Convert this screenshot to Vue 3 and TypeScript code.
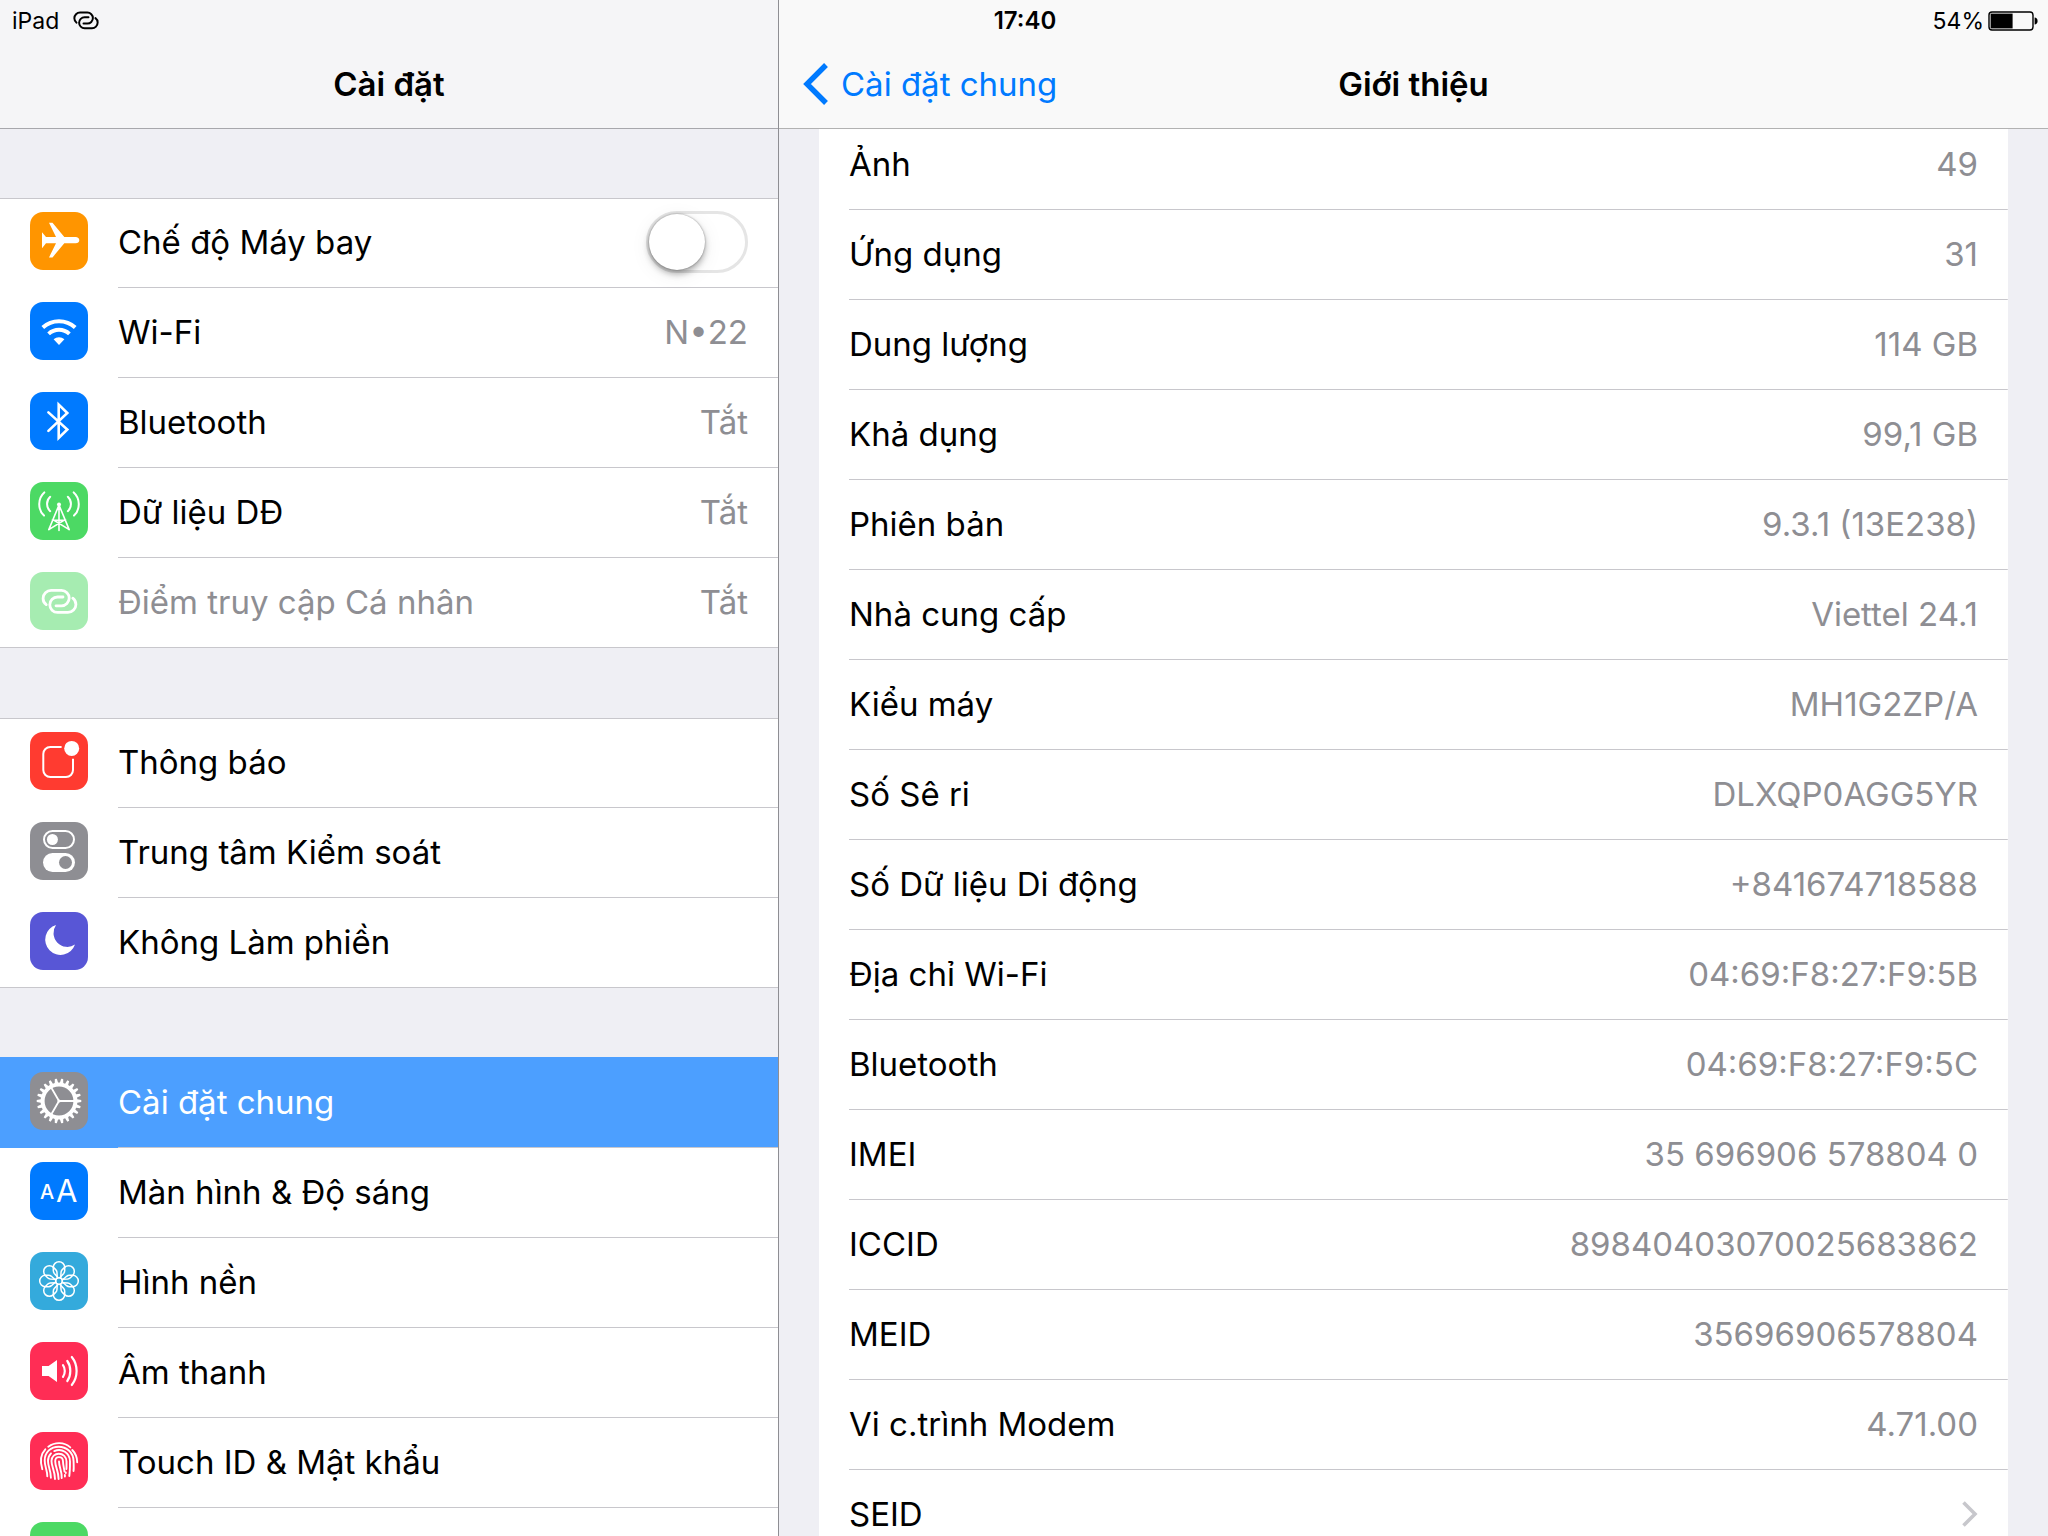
<script setup lang="ts">
import { ref } from 'vue'

interface MenuItem {
  icon: string
  color: string
  label: string
  value?: string
  toggle?: boolean
  disabled?: boolean
  selected?: boolean
}

interface InfoItem {
  label: string
  value?: string
}

const airplaneMode = ref(false)

const groups: MenuItem[][] = [
  [
    { icon: 'airplane', color: '#ff9500', label: 'Chế độ Máy bay', toggle: true },
    { icon: 'wifi', color: '#007aff', label: 'Wi-Fi', value: 'N•22' },
    { icon: 'bluetooth', color: '#007aff', label: 'Bluetooth', value: 'Tắt' },
    { icon: 'cellular', color: '#4cd964', label: 'Dữ liệu DĐ', value: 'Tắt' },
    { icon: 'hotspot', color: '#a6ecb1', label: 'Điểm truy cập Cá nhân', value: 'Tắt', disabled: true },
  ],
  [
    { icon: 'notifications', color: '#ff3b30', label: 'Thông báo' },
    { icon: 'control', color: '#8e8e93', label: 'Trung tâm Kiểm soát' },
    { icon: 'moon', color: '#5856d6', label: 'Không Làm phiền' },
  ],
  [
    { icon: 'gear', color: '#8e8e93', label: 'Cài đặt chung', selected: true },
    { icon: 'display', color: '#007aff', label: 'Màn hình & Độ sáng' },
    { icon: 'wallpaper', color: '#34aadc', label: 'Hình nền' },
    { icon: 'sound', color: '#ff2d55', label: 'Âm thanh' },
    { icon: 'touchid', color: '#ff2d55', label: 'Touch ID & Mật khẩu' },
    { icon: 'battery', color: '#4cd964', label: '' },
  ],
]

const info: InfoItem[] = [
  { label: 'Ảnh', value: '49' },
  { label: 'Ứng dụng', value: '31' },
  { label: 'Dung lượng', value: '114 GB' },
  { label: 'Khả dụng', value: '99,1 GB' },
  { label: 'Phiên bản', value: '9.3.1 (13E238)' },
  { label: 'Nhà cung cấp', value: 'Viettel 24.1' },
  { label: 'Kiểu máy', value: 'MH1G2ZP/A' },
  { label: 'Số Sê ri', value: 'DLXQP0AGG5YR' },
  { label: 'Số Dữ liệu Di động', value: '+841674718588' },
  { label: 'Địa chỉ Wi-Fi', value: '04:69:F8:27:F9:5B' },
  { label: 'Bluetooth', value: '04:69:F8:27:F9:5C' },
  { label: 'IMEI', value: '35 696906 578804 0' },
  { label: 'ICCID', value: '89840403070025683862' },
  { label: 'MEID', value: '35696906578804' },
  { label: 'Vi c.trình Modem', value: '4.71.00' },
  { label: 'SEID' },
]

// Outline of the cog: tapered teeth around a circle centred on 29,29
function gearOutline(teeth: number, root: number, tip: number): string {
  const step = (Math.PI * 2) / teeth
  const at = (r: number, a: number) => `${(29 + r * Math.cos(a)).toFixed(2)} ${(29 + r * Math.sin(a)).toFixed(2)}`
  const points: string[] = []
  for (let i = 0; i < teeth; i++) {
    const a = i * step
    points.push(at(root, a - step * 0.32), at(tip, a - step * 0.16), at(tip, a + step * 0.16), at(root, a + step * 0.32))
  }
  return `M${points.join('L')}Z`
}

const gearPath = gearOutline(22, 18.4, 22.3) + 'M29 14.6a14.4 14.4 0 1 0 0 28.8a14.4 14.4 0 1 0 0-28.8Z'
const linkPath =
  'M16.2 32.6C14 31 13.1 28.8 13.1 26.4A8 8 0 0 1 21.1 18.4H31.5A7.7 7.7 0 0 1 31.5 33.8H26' +
  'M42.8 26.2C45 27.8 45.9 30 45.9 32.4A8 8 0 0 1 37.9 40.4H27.5A7.7 7.7 0 0 1 27.5 25H33'
const petals = [0, 45, 90, 135, 180, 225, 270, 315]
</script>

<template>
  <div class="app">
    <div class="status">
      <div class="carrier">
        <span>iPad</span>
        <svg width="26" height="19" viewBox="11.2 16.2 36.6 26.6" class="line" stroke-width="2.8"><path :d="linkPath" /></svg>
      </div>
      <span class="clock">17:40</span>
      <div class="charge">
        <span>54%</span>
        <svg width="50" height="20" viewBox="0 0 50 20">
          <rect x="1" y="1" width="44" height="18" rx="3" fill="none" stroke="#000" stroke-width="1.4" />
          <rect x="2.6" y="2.6" width="22" height="14.8" fill="#000" />
          <path d="M46.6 6.5c1.8.2 3 1 3 3.5s-1.2 3.3-3 3.5Z" fill="#000" />
        </svg>
      </div>
    </div>

    <aside class="sidebar">
      <header class="bar">
        <h1 class="title">Cài đặt</h1>
      </header>
      <nav class="menu">
        <div v-for="(group, g) in groups" :key="g" class="group">
          <component
            :is="item.toggle ? 'label' : 'a'"
            v-for="item in group"
            :key="item.icon"
            :href="item.toggle ? undefined : '#' + item.icon"
            class="row"
            :class="{ selected: item.selected, disabled: item.disabled }"
          >
            <svg class="icon" viewBox="0 0 58 58" :style="{ background: item.color }" aria-hidden="true">
              <path
                v-if="item.icon === 'airplane'"
                fill="#fff"
                d="M49.3 28.2c0-1.8-1.6-3.1-3.6-3.1H34.3L22.5 10.8H19L26 25.1H16L12 20.2V36.2L16 31.3H26L19 45.4H22.5L34.3 31.3H45.7c2 0 3.6-1.3 3.6-3.1Z"
              />
              <g v-else-if="item.icon === 'wifi'">
                <g class="line butt" stroke-width="4">
                  <path d="M12.8 25.5A24 24 0 0 1 45.2 25.5" />
                  <path d="M18.6 31.9A15.3 15.3 0 0 1 39.4 31.9" />
                </g>
                <path d="M29 43L23.6 37.3A8 8 0 0 1 34.4 37.3Z" fill="#fff" />
              </g>
              <path
                v-else-if="item.icon === 'bluetooth'"
                class="line"
                stroke-width="2.6"
                stroke-miterlimit="8"
                d="M18.4 20.4L37.3 37.5L28.7 46V12.5L37.3 21L18.4 38.9"
              />
              <g v-else-if="item.icon === 'cellular'" class="line" stroke-width="2">
                <path d="M14.3 10.4C7.6 16.2 7.6 27.8 14 33.6M43.7 10.4C50.4 16.2 50.4 27.8 44 33.6" />
                <path d="M20.2 14.8C16 18.6 16 25.4 20.2 29.2M37.8 14.8C42 18.6 42 25.4 37.8 29.2" />
                <path stroke-width="1.6" d="M29 23V48.5M28.6 24L18.8 47.6M29.4 24L39.2 47.6M18.8 47.6L34 38.2H24L39.2 47.6" />
                <circle cx="29" cy="22.6" r="2" fill="#fff" stroke="none" />
              </g>
              <path v-else-if="item.icon === 'hotspot'" class="line" stroke-width="2.8" :d="linkPath" />
              <g v-else-if="item.icon === 'notifications'">
                <path
                  class="line butt"
                  stroke-width="2"
                  d="M31.6 15H20.3a7 7 0 0 0-7 7V38a7 7 0 0 0 7 7H36a7 7 0 0 0 7-7V26.7"
                />
                <circle cx="41.7" cy="16.4" r="7.5" fill="#fff" />
              </g>
              <g v-else-if="item.icon === 'control'">
                <rect class="line" x="14" y="9" width="30" height="17" rx="8.5" stroke-width="2" />
                <circle cx="22.4" cy="17.5" r="5.5" fill="#fff" />
                <rect x="13" y="31" width="32" height="19" rx="9.5" fill="#fff" />
                <circle cx="35.5" cy="40.5" r="6.5" fill="#8e8e93" />
              </g>
              <path
                v-else-if="item.icon === 'moon'"
                fill="#fff"
                d="M26 13A15.3 15.3 0 1 0 45 32.6A13.9 13.9 0 0 1 26 13Z"
              />
              <g v-else-if="item.icon === 'gear'">
                <path :d="gearPath" fill="#fff" fill-rule="evenodd" />
                <path class="line" stroke-width="1.8" d="M29 29H44M29 29L21.5 16M29 29L21.5 42" />
                <circle cx="29" cy="29" r="1.6" fill="#fff" />
              </g>
              <g v-else-if="item.icon === 'display'" fill="#fff">
                <text x="10" y="37" font-size="20" font-weight="500">A</text>
                <text x="26" y="40" font-size="31" font-weight="400">A</text>
              </g>
              <g v-else-if="item.icon === 'wallpaper'" class="line" stroke-width="1.5">
                <circle cx="29" cy="29" r="3.3" />
                <path
                  v-for="angle in petals"
                  :key="angle"
                  :transform="`rotate(${angle} 29 29)`"
                  d="M28.2 25.8L24.3 21.4Q23.3 20.2 23.3 18.600V15.400a5.700 5.700 0 0 1 11.400 0V18.600Q34.700 20.200 33.700 21.400L29.800 25.800"
                />
              </g>
              <g v-else-if="item.icon === 'sound'">
                <path d="M12 24H18.6L27 18V40L18.6 34H12Z" fill="#fff" />
                <path
                  class="line"
                  stroke-width="2.2"
                  d="M33 23.2C35.4 26.5 35.4 31.5 33 34.8M37.3 19C41.3 24.5 41.3 33.5 37.3 39M41.8 15C48.2 23 48.2 35 41.8 43"
                />
              </g>
              <path
                v-else-if="item.icon === 'touchid'"
                class="line"
                stroke-width="1.9"
                d="M18.3 14.7C25 9.8 34 9.8 40.3 15.4M15.3 17.3C10.8 22 9.8 29 12.3 37.2M42.3 18C45.6 21.4 47.2 25.5 47.2 30.2M17.3 44.2C17.3 38 14.7 35 14.7 28.5C14.7 20 21 14.7 28.7 14.7C36 14.7 43.6 20 43.6 29.5C43.6 33 44 36 43.5 39M20.9 45.8C20.9 38 18 35 18 29C18 26 19 23.3 21 21.3M24.3 19.1C31.5 15.8 40 20.5 40 29.5C40 35 40 39 39.3 44M25 47C25 39 21.5 35 21.5 29C21.5 24.5 25 21.7 28.8 21.7C33 21.7 36.5 25 36.5 29.5C36.5 32 36.6 34.5 36.4 37M34.9 44.5V43M35.8 41V40.5M28.6 47C28.6 39 25.2 35 25.2 29.3C25.2 26.8 26.8 25.1 29 25.1C31.5 25.1 33 27 33 29.5C33 33 34 36 34.5 39.5M31.7 46C32.2 40 29 35 29 29.5"
              />
            </svg>
            <span class="cell">
              <span class="name">{{ item.label }}</span>
              <input v-if="item.toggle" v-model="airplaneMode" type="checkbox" role="switch" class="switch" />
              <span v-else-if="item.value" class="value">{{ item.value }}</span>
            </span>
          </component>
        </div>
      </nav>
    </aside>

    <main class="detail">
      <header class="bar">
        <a href="#general" class="back">
          <svg width="26" height="44" viewBox="0 0 26 44"><path d="M23 3L4 22L23 41" fill="none" stroke="#007aff" stroke-width="5.4" /></svg>
          <span>Cài đặt chung</span>
        </a>
        <h2 class="title">Giới thiệu</h2>
      </header>
      <div class="scroller">
        <table class="info">
          <tbody>
            <tr v-for="item in info" :key="item.label">
              <th scope="row">{{ item.label }}</th>
              <td>
                <template v-if="item.value">{{ item.value }}</template>
                <svg v-else class="chevron" width="16" height="26" viewBox="0 0 16 26">
                  <path d="M1.5 1.5L13 13L1.5 24.5" fill="none" stroke="#c7c7cc" stroke-width="3.6" />
                </svg>
              </td>
            </tr>
          </tbody>
        </table>
      </div>
    </main>
  </div>
</template>

<style>
body {
  margin: 0;
}
</style>

<style scoped>
.app {
  position: relative;
  display: flex;
  height: 100vh;
  overflow: hidden;
  background: #efeff4;
  color: #000;
  font-family: Inter, "Noto Sans", sans-serif;
  font-size: 33px;
  line-height: 40px;
}

.status {
  position: absolute;
  inset: 0 0 auto;
  z-index: 2;
  display: grid;
  grid-template-columns: 1fr auto 1fr;
  align-items: center;
  height: 41px;
  padding: 0 10px 0 12px;
  font-size: 23px;
  line-height: 28px;
}

.carrier,
.charge {
  display: flex;
  align-items: center;
  gap: 14px;
}

.charge {
  justify-content: flex-end;
  gap: 4px;
}

.clock {
  font-size: 24px;
  font-weight: 600;
}

.line {
  fill: none;
  stroke: #fff;
  stroke-linecap: round;
}

.line.butt {
  stroke-linecap: butt;
}

.carrier .line {
  stroke: #000;
}

.sidebar {
  flex: none;
  display: flex;
  flex-direction: column;
  box-sizing: border-box;
  width: 779px;
  border-right: 1px solid #8e8e93;
}

.detail {
  flex: 1;
  display: flex;
  flex-direction: column;
  min-width: 0;
}

.bar {
  position: relative;
  flex: none;
  display: grid;
  grid-template-columns: 1fr auto 1fr;
  align-items: center;
  box-sizing: border-box;
  height: 129px;
  padding: 40px 24px 0;
  border-bottom: 1px solid #b2b2b2;
  background: #f9f9f9;
}

.sidebar .bar {
  border-bottom-color: #a7a7ac;
  background: #f5f5f7;
}

.title {
  grid-column: 2;
  margin: 0;
  font-size: 33px;
  font-weight: 600;
}

.back {
  display: flex;
  align-items: center;
  gap: 12px;
  color: #007aff;
  text-decoration: none;
}

.menu,
.scroller {
  flex: 1;
  min-height: 0;
  overflow-y: auto;
  scrollbar-width: none;
}

.group {
  margin-top: 70px;
  background: #fff;
  box-shadow: inset 0 1px #c8c7cc, inset 0 -1px #c8c7cc;
}

.group:first-child {
  margin-top: 69px;
}

.row {
  display: flex;
  align-items: center;
  gap: 30px;
  padding-left: 30px;
  color: inherit;
  text-decoration: none;
}

.row.selected {
  margin-top: -1px;
  padding-top: 1px;
  background: #4c9fff;
  color: #fff;
}

.row.disabled {
  color: #8e8e93;
}

.icon {
  flex: none;
  width: 58px;
  height: 58px;
  margin-bottom: 4px;
  border-radius: 13px;
}

.cell {
  flex: 1;
  display: flex;
  align-items: center;
  justify-content: space-between;
  box-sizing: border-box;
  height: 90px;
  padding: 0 30px 1px 0;
  border-bottom: 1px solid #c8c7cc;
}

.value {
  color: #8e8e93;
}

.switch {
  appearance: none;
  box-sizing: border-box;
  width: 102px;
  height: 62px;
  margin: 0;
  border: 3px solid #e5e5e5;
  border-radius: 31px;
  background: #fff;
}

.switch::before {
  content: "";
  display: block;
  width: 56px;
  height: 56px;
  border-radius: 50%;
  background: #fff;
  box-shadow: 0 0 2px rgba(0, 0, 0, 0.4), 0 4px 6px rgba(0, 0, 0, 0.3), 0 4px 20px rgba(0, 0, 0, 0.08);
}

.switch:checked {
  border-color: #4cd964;
  background: #4cd964;
}

.switch:checked::before {
  margin-left: auto;
}

.scroller {
  padding: 0 40px;
}

.info {
  width: 100%;
  margin-top: -9px;
  border-spacing: 0;
  background: #fff;
}

.info th,
.info td {
  box-sizing: border-box;
  height: 90px;
  padding: 0 0 2px;
  background: linear-gradient(#c8c7cc, #c8c7cc) bottom / 100% 1px no-repeat;
}

.info th {
  padding-left: 30px;
  background-position: 30px 100%;
  font-weight: 400;
  text-align: left;
}

.info td {
  padding-right: 30px;
  color: #8e8e93;
  text-align: right;
}

.chevron {
  display: block;
  margin-left: auto;
}
</style>
